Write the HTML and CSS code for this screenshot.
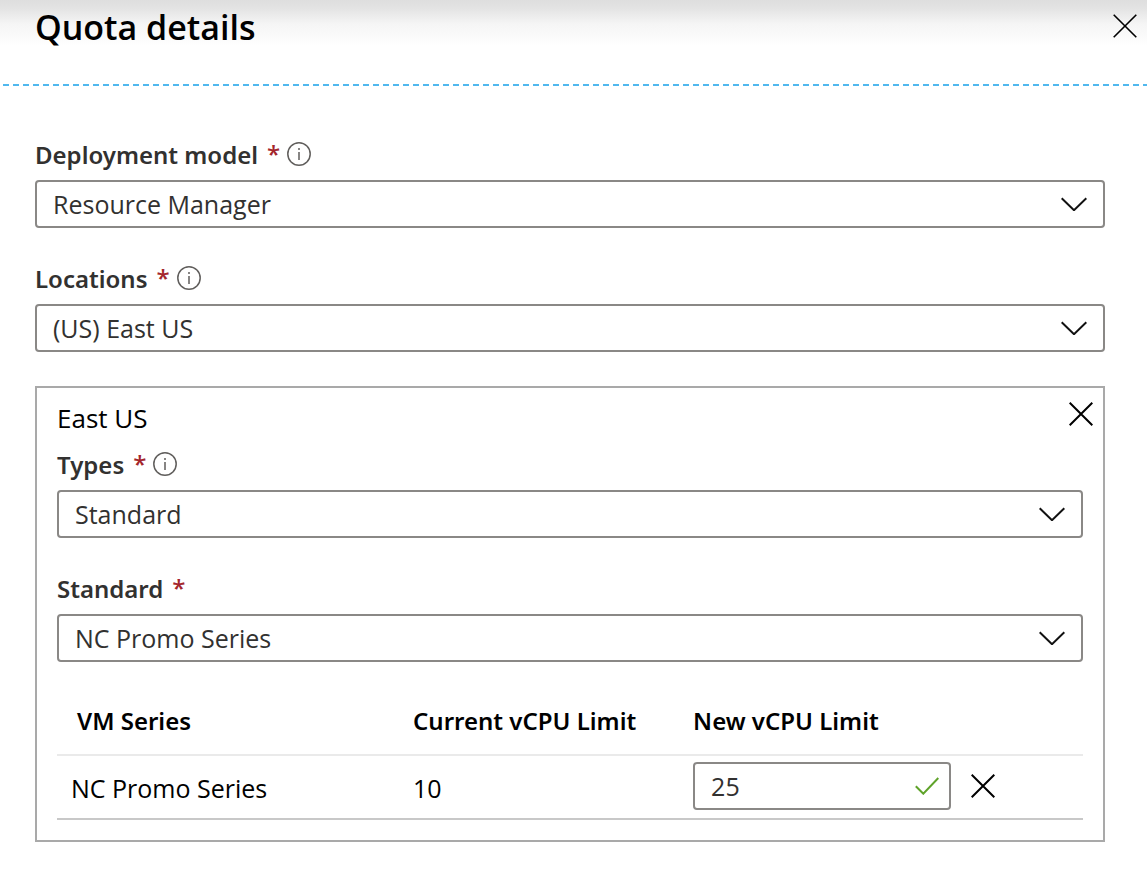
FILE: index.html
```html
<!DOCTYPE html>
<html lang="en">
<head>
<meta charset="utf-8">
<meta name="viewport" content="width=device-width, initial-scale=1">
<title>Quota details</title>
<link rel="stylesheet" href="styles.css">
</head>
<body>
<header class="blade-header">
  <h1 class="blade-title">Quota details</h1>
  <button class="icon-button" type="button" aria-label="Close">
    <svg class="icon-close thin" viewBox="0 0 24 24" aria-hidden="true"><path d="M.7.7l22.6 22.6M23.3.7L.7 23.3"/></svg>
  </button>
</header>
<main class="blade-body">
  <div class="field">
    <div class="field-label">
      <label for="model">Deployment model</label><span class="required">*</span>
      <svg class="icon-info" viewBox="0 0 24 24" aria-hidden="true"><circle cx="12" cy="12" r="11.2"/><path d="M12 10v8M12 6v2"/></svg>
    </div>
    <div class="dropdown">
      <select id="model" class="control"><option>Resource Manager</option></select>
      <svg class="icon-chevron" viewBox="0 0 26 14" aria-hidden="true"><path d="M.7 1.200L13 13.200 25.300 1.200"/></svg>
    </div>
  </div>
  <div class="field">
    <div class="field-label">
      <label for="locations">Locations</label><span class="required">*</span>
      <svg class="icon-info" viewBox="0 0 24 24" aria-hidden="true"><circle cx="12" cy="12" r="11.2"/><path d="M12 10v8M12 6v2"/></svg>
    </div>
    <div class="dropdown">
      <select id="locations" class="control"><option>(US) East US</option></select>
      <svg class="icon-chevron" viewBox="0 0 26 14" aria-hidden="true"><path d="M.7 1.200L13 13.200 25.300 1.200"/></svg>
    </div>
  </div>
  <section class="region">
    <div class="region-header">
      <h2 class="region-title">East US</h2>
      <button class="icon-button region-close" type="button" aria-label="Remove East US">
        <svg class="icon-close" viewBox="0 0 24 24" aria-hidden="true"><path d="M.7.7l22.6 22.6M23.3.7L.7 23.3"/></svg>
      </button>
    </div>
    <div class="region-fields">
      <div class="field">
        <div class="field-label">
          <label for="types">Types</label><span class="required">*</span>
          <svg class="icon-info" viewBox="0 0 24 24" aria-hidden="true"><circle cx="12" cy="12" r="11.2"/><path d="M12 10v8M12 6v2"/></svg>
        </div>
        <div class="dropdown">
          <select id="types" class="control"><option>Standard</option></select>
          <svg class="icon-chevron" viewBox="0 0 26 14" aria-hidden="true"><path d="M.7 1.200L13 13.200 25.300 1.200"/></svg>
        </div>
      </div>
      <div class="field">
        <div class="field-label">
          <label for="standard">Standard</label><span class="required">*</span>
        </div>
        <div class="dropdown">
          <select id="standard" class="control"><option>NC Promo Series</option></select>
          <svg class="icon-chevron" viewBox="0 0 26 14" aria-hidden="true"><path d="M.7 1.200L13 13.200 25.300 1.200"/></svg>
        </div>
      </div>
    </div>
    <table class="quota">
      <thead>
        <tr><th class="col-series">VM Series</th><th class="col-current">Current vCPU Limit</th><th>New vCPU Limit</th></tr>
      </thead>
      <tbody>
        <tr>
          <td class="series">NC Promo Series</td>
          <td>10</td>
          <td class="edit-cell">
            <div class="limit-edit">
              <div class="limit-box">
                <input class="control" type="text" value="25" aria-label="New vCPU Limit">
                <svg class="icon-check" viewBox="0 0 24 18" aria-hidden="true"><path d="M.8 9.200L8.300 16.700 23.300 1"/></svg>
              </div>
              <button class="icon-button" type="button" aria-label="Remove NC Promo Series">
                <svg class="icon-close" viewBox="0 0 24 24" aria-hidden="true"><path d="M.7.7l22.6 22.6M23.3.7L.7 23.3"/></svg>
              </button>
            </div>
          </td>
        </tr>
      </tbody>
    </table>
  </section>
</main>
</body>
</html>
```
FILE: styles.css
```css
* {
  box-sizing: border-box;
}

body {
  margin: 0;
  background: #fff;
  color: #000;
  font-family: "Open Sans", "Noto Sans", sans-serif;
  font-size: 25px;
  line-height: 32px;
}

h1,
h2 {
  margin: 0;
}

svg {
  fill: none;
  flex: none;
}

.blade-header {
  display: flex;
  justify-content: space-between;
  align-items: flex-start;
  height: 86px;
  padding-left: 35px;
  background:
    repeating-linear-gradient(90deg, transparent 0 3px, #50b8ee 3px 9px, transparent 9px 10px) bottom / 100% 2px no-repeat,
    linear-gradient(#dedede, #e3e3e3 8px, #f5f5f5 24px, #fff 46px);
}

.blade-title {
  font-size: 34px;
  font-weight: 600;
  line-height: 54px;
}

.icon-button {
  display: flex;
  align-items: center;
  justify-content: center;
  width: 44px;
  height: 52px;
  padding: 0;
  border: 0;
  background: none;
}

.icon-close {
  width: 24px;
  height: 24px;
  stroke: #000;
  stroke-width: 2;
}

.icon-close.thin {
  stroke-width: 1.6;
}

.blade-body {
  display: grid;
  gap: 34px;
  padding: 52px 42px 40px 35px;
}

.field-label {
  display: flex;
  align-items: center;
  height: 32px;
  margin-bottom: 10px;
  color: #323130;
  font-family: "Noto Sans", "Open Sans", sans-serif;
  font-size: 24px;
  font-weight: 600;
}

.field-label label {
  padding-top: 2px;
}

.required {
  margin-left: 9px;
  color: #a4262c;
  font-family: "Open Sans", "Noto Sans", sans-serif;
}

.icon-info {
  width: 24px;
  height: 24px;
  margin-left: 7px;
  stroke: #605e5c;
  stroke-width: 1.5;
}

.dropdown,
.limit-box {
  display: grid;
  align-items: center;
}

.dropdown > *,
.limit-box > * {
  grid-area: 1 / 1;
}

.control {
  appearance: none;
  width: 100%;
  height: 48px;
  padding: 0 48px 0 16px;
  border: 2px solid #8a8886;
  border-radius: 4px;
  background: #fff;
  color: #323130;
  font: inherit;
}

.icon-chevron {
  justify-self: end;
  width: 26px;
  height: 14px;
  margin-right: 18px;
  stroke: #111;
  stroke-width: 2;
  pointer-events: none;
}

.region {
  padding: 0 20px 20px;
  border: 2px solid #a9a9a9;
}

.region-header {
  display: flex;
  justify-content: space-between;
  height: 60px;
}

.region-title {
  font-size: 26px;
  font-weight: 400;
  line-height: 60px;
}

.region-close {
  margin-right: -20px;
}

.region-fields {
  display: grid;
  gap: 34px;
}

.quota {
  width: 100%;
  margin-top: 24px;
  border-collapse: separate;
  border-spacing: 0;
  table-layout: fixed;
}

.quota th {
  height: 70px;
  padding: 2px 0 0;
  border-bottom: 2px solid #eaeaea;
  font-family: "Noto Sans", "Open Sans", sans-serif;
  font-size: 24px;
  font-weight: 600;
  text-align: left;
}

.quota td {
  height: 64px;
  padding: 2px 0 0;
  border-bottom: 2px solid #c8c8c8;
}

.quota .col-series {
  width: 34.7%;
  padding-left: 20px;
}

.col-current {
  width: 27.3%;
}

.quota .series {
  padding-left: 14px;
}

.quota .edit-cell {
  padding: 0 0 2px;
}

.limit-edit {
  display: flex;
  align-items: center;
  gap: 10px;
  height: 48px;
}

.limit-box {
  width: 258px;
}

.icon-check {
  justify-self: end;
  width: 24px;
  height: 18px;
  margin-right: 12px;
  stroke: #5fa32a;
  stroke-width: 2;
}
```
